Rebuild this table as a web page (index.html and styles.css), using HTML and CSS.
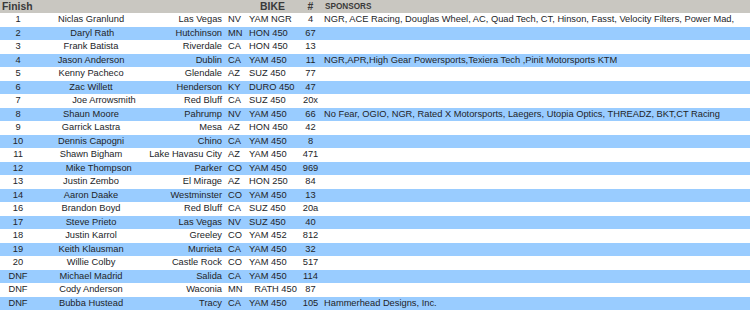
FILE: index.html
```html
<!DOCTYPE html>
<html>
<head>
<meta charset="utf-8">
<link rel="stylesheet" href="styles.css">
</head>
<body>
<table class="results">
<colgroup>
<col class="c-fin"><col class="c-name"><col class="c-city"><col class="c-st"><col class="c-bike"><col class="c-num"><col class="c-sp">
</colgroup>
<thead>
<tr class="head"><th class="h-fin">Finish</th><th></th><th></th><th></th><th class="h-bike">BIKE</th><th class="h-num">#</th><th class="h-sp">SPONSORS</th></tr>
</thead>
<tbody>
<tr><td class="fin">1</td><td class="name">Niclas Granlund</td><td class="city">Las Vegas</td><td class="st">NV</td><td class="bike">YAM NGR</td><td class="num">4</td><td class="sp">NGR, ACE Racing, Douglas Wheel, AC, Quad Tech, CT, Hinson, Fasst, Velocity Filters, Power Mad,</td></tr>
<tr><td class="fin">2</td><td class="name">&nbsp;Daryl Rath</td><td class="city">Hutchinson</td><td class="st">MN</td><td class="bike">HON 450</td><td class="num">67</td><td class="sp"></td></tr>
<tr><td class="fin">3</td><td class="name">Frank Batista</td><td class="city">Riverdale</td><td class="st">CA</td><td class="bike">HON 450</td><td class="num">13</td><td class="sp"></td></tr>
<tr><td class="fin">4</td><td class="name">Jason Anderson</td><td class="city">Dublin</td><td class="st">CA</td><td class="bike">YAM 450</td><td class="num">11</td><td class="sp">NGR,APR,High Gear Powersports,Texiera Tech ,Pinit Motorsports KTM</td></tr>
<tr><td class="fin">5</td><td class="name">Kenny Pacheco</td><td class="city">Glendale</td><td class="st">AZ</td><td class="bike">SUZ 450</td><td class="num">77</td><td class="sp"></td></tr>
<tr><td class="fin">6</td><td class="name">Zac Willett</td><td class="city">Henderson</td><td class="st">KY</td><td class="bike">DURO 450</td><td class="num">47</td><td class="sp"></td></tr>
<tr><td class="fin">7</td><td class="name">&nbsp;&nbsp;&nbsp;&nbsp;&nbsp;&nbsp;&nbsp;&nbsp;&nbsp;&nbsp;Joe Arrowsmith</td><td class="city">Red Bluff</td><td class="st">CA</td><td class="bike">SUZ 450</td><td class="num">20x</td><td class="sp"></td></tr>
<tr><td class="fin">8</td><td class="name">Shaun Moore</td><td class="city">Pahrump</td><td class="st">NV</td><td class="bike">YAM 450</td><td class="num">66</td><td class="sp">No Fear, OGIO, NGR, Rated X Motorsports, Laegers, Utopia Optics, THREADZ, BKT,CT Racing</td></tr>
<tr><td class="fin">9</td><td class="name">Garrick Lastra</td><td class="city">Mesa</td><td class="st">AZ</td><td class="bike">HON 450</td><td class="num">42</td><td class="sp"></td></tr>
<tr><td class="fin">10</td><td class="name">Dennis Capogni</td><td class="city">Chino</td><td class="st">CA</td><td class="bike">YAM 450</td><td class="num">8</td><td class="sp"></td></tr>
<tr><td class="fin">11</td><td class="name">Shawn Bigham</td><td class="city">Lake Havasu City</td><td class="st">AZ</td><td class="bike">YAM 450</td><td class="num">471</td><td class="sp"></td></tr>
<tr><td class="fin">12</td><td class="name">&nbsp;&nbsp;&nbsp;&nbsp;&nbsp;&nbsp;Mike Thompson</td><td class="city">Parker</td><td class="st">CO</td><td class="bike">YAM 450</td><td class="num">969</td><td class="sp"></td></tr>
<tr><td class="fin">13</td><td class="name">Justin Zembo</td><td class="city">El Mirage</td><td class="st">AZ</td><td class="bike">HON 250</td><td class="num">84</td><td class="sp"></td></tr>
<tr><td class="fin">14</td><td class="name">Aaron Daake</td><td class="city">Westminster</td><td class="st">CO</td><td class="bike">YAM 450</td><td class="num">13</td><td class="sp"></td></tr>
<tr><td class="fin">16</td><td class="name">Brandon Boyd</td><td class="city">Red Bluff</td><td class="st">CA</td><td class="bike">SUZ 450</td><td class="num">20a</td><td class="sp"></td></tr>
<tr><td class="fin">17</td><td class="name">Steve Prieto</td><td class="city">Las Vegas</td><td class="st">NV</td><td class="bike">SUZ 450</td><td class="num">40</td><td class="sp"></td></tr>
<tr><td class="fin">18</td><td class="name">Justin Karrol</td><td class="city">Greeley</td><td class="st">CO</td><td class="bike">YAM 452</td><td class="num">812</td><td class="sp"></td></tr>
<tr><td class="fin">19</td><td class="name">Keith Klausman</td><td class="city">Murrieta</td><td class="st">CA</td><td class="bike">YAM 450</td><td class="num">32</td><td class="sp"></td></tr>
<tr><td class="fin">20</td><td class="name">Willie Colby</td><td class="city">Castle Rock</td><td class="st">CO</td><td class="bike">YAM 450</td><td class="num">517</td><td class="sp"></td></tr>
<tr><td class="fin">DNF</td><td class="name">Michael Madrid</td><td class="city">Salida</td><td class="st">CA</td><td class="bike">YAM 450</td><td class="num">114</td><td class="sp"></td></tr>
<tr><td class="fin">DNF</td><td class="name">Cody Anderson</td><td class="city">Waconia</td><td class="st">MN</td><td class="bike">&nbsp;&nbsp;RATH 450</td><td class="num">87</td><td class="sp"></td></tr>
<tr><td class="fin">DNF</td><td class="name">Bubba Hustead</td><td class="city">Tracy</td><td class="st">CA</td><td class="bike">YAM 450</td><td class="num">105</td><td class="sp">Hammerhead Designs, Inc.</td></tr>
</tbody>
</table>
</body>
</html>
```
FILE: styles.css
```css
html, body {
  margin: 0;
  padding: 0;
  background: #ffffff;
}
.results {
  width: 750px;
  table-layout: fixed;
  border-collapse: collapse;
  border-spacing: 0;
  font-family: "Liberation Sans", Arial, sans-serif;
  font-size: 9.3px;
  color: #222428;
}
.c-fin { width: 36px; }
.c-name { width: 110px; }
.c-city { width: 78px; }
.c-st { width: 22px; }
.c-bike { width: 53px; }
.c-num { width: 23px; }
.c-sp { width: 428px; }
.results th, .results td {
  padding: 0;
  white-space: nowrap;
  overflow: hidden;
  line-height: 13px;
}
.head {
  background: #c9c7c1;
  height: 13px;
}
.head th {
  color: #3a3a3a;
  font-weight: bold;
  font-size: 10.4px;
  height: 13px;
}
.h-fin { text-align: left; padding-left: 2px !important; }
.h-bike { text-align: center; }
.h-num { text-align: center; }
.h-sp { text-align: left; font-size: 8.2px !important; padding-left: 3px !important; }
.results tbody tr { height: 13.5px; }
.results tbody tr:nth-child(even) { background: #99ccff; }
.fin { text-align: center; }
.name { text-align: center; }
.city { text-align: right; padding-right: 2px !important; }
.st { text-align: left; padding-left: 4px !important; }
.bike { text-align: left; padding-left: 3px !important; }
.num { text-align: center; }
.sp { text-align: left; padding-left: 2px !important; }
```
